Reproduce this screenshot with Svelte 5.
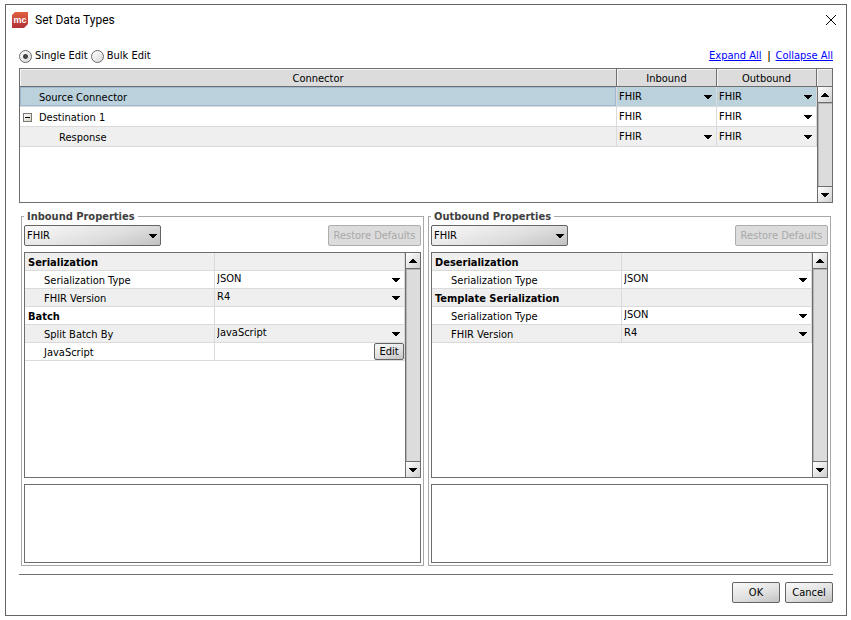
<script>
  let mode = $state("single");

  let connectors = $state([
    { name: "Source Connector", level: 0, inbound: "FHIR", outbound: "FHIR", selected: true },
    { name: "Destination 1", level: 0, inbound: "FHIR", outbound: "FHIR", fixed: true, expandable: true },
    { name: "Response", level: 1, inbound: "FHIR", outbound: "FHIR" },
  ]);

  let panels = $state([
    {
      id: "inbound",
      title: "Inbound Properties",
      type: "FHIR",
      rows: [
        { name: "Serialization", group: true },
        { name: "Serialization Type", value: "JSON" },
        { name: "FHIR Version", value: "R4" },
        { name: "Batch", group: true },
        { name: "Split Batch By", value: "JavaScript" },
        { name: "JavaScript", edit: true },
      ],
    },
    {
      id: "outbound",
      title: "Outbound Properties",
      type: "FHIR",
      rows: [
        { name: "Deserialization", group: true },
        { name: "Serialization Type", value: "JSON" },
        { name: "Template Serialization", group: true },
        { name: "Serialization Type", value: "JSON" },
        { name: "FHIR Version", value: "R4" },
      ],
    },
  ]);
</script>

{#snippet arrow(up)}
  <svg class="arrow" class:up width="8" height="4" viewBox="0 0 8 4" shape-rendering="crispEdges" aria-hidden="true">
    <path d="M0 0h8v1h-1v1h-1v1h-1v1h-2v-1h-1v-1h-1v-1h-1z" />
  </svg>
{/snippet}

{#snippet scrollbar()}
  <div class="scrollbar">
    <button type="button" aria-label="Scroll up">{@render arrow(true)}</button>
    <div class="track"></div>
    <button type="button" aria-label="Scroll down">{@render arrow(false)}</button>
  </div>
{/snippet}

{#snippet cellSelect(value, label)}
  <div class="cell-select">
    <select aria-label={label}>
      <option>{value}</option>
    </select>
    {@render arrow(false)}
  </div>
{/snippet}

<div class="dialog" role="dialog" aria-labelledby="dialog-title">
  <header class="titlebar">
    <svg class="logo" width="16" height="16" viewBox="0 0 16 16" aria-hidden="true">
      <defs>
        <linearGradient id="logo-fill" x1="0" y1="0" x2="0" y2="1">
          <stop offset="0" stop-color="#e2603f" />
          <stop offset="1" stop-color="#b03038" />
        </linearGradient>
      </defs>
      <path d="M3 0H16V12L12 16H0V3Z" fill="url(#logo-fill)" />
      <text x="8" y="11" text-anchor="middle">mc</text>
    </svg>
    <h1 id="dialog-title">Set Data Types</h1>
    <button type="button" class="close" aria-label="Close">
      <svg width="10" height="10" viewBox="0 0 10 10"><path d="M0 0L10 10M10 0L0 10" stroke="#000" /></svg>
    </button>
  </header>

  <main>
    <div class="toolbar">
      <label><input type="radio" name="mode" value="single" bind:group={mode} />Single Edit</label>
      <label><input type="radio" name="mode" value="bulk" bind:group={mode} />Bulk Edit</label>
      <nav>
        <a href="#expand">Expand All</a>
        <span class="divider"></span>
        <a href="#collapse">Collapse All</a>
      </nav>
    </div>

    <div class="pane connectors">
      <div class="view">
        <table>
          <thead>
            <tr>
              <th>Connector</th>
              <th class="type-col">Inbound</th>
              <th class="type-col">Outbound</th>
            </tr>
          </thead>
          <tbody>
            {#each connectors as row (row.name)}
              <tr class:selected={row.selected}>
                <td>
                  <div class="node" class:child={row.level > 0}>
                    <span class="handle">
                      {#if row.expandable}
                        <button type="button" class="toggle" aria-label="Collapse {row.name}"></button>
                      {/if}
                    </span>
                    <span class="name">{row.name}</span>
                  </div>
                </td>
                <td>
                  {#if row.fixed}
                    <span class="fixed">{row.inbound}</span>
                  {:else}
                    {@render cellSelect(row.inbound, row.name + " inbound")}
                  {/if}
                </td>
                <td>{@render cellSelect(row.outbound, row.name + " outbound")}</td>
              </tr>
            {/each}
          </tbody>
        </table>
      </div>
      <div class="side">
        <div class="corner"></div>
        {@render scrollbar()}
      </div>
    </div>

    <div class="panels">
      {#each panels as panel (panel.id)}
        <fieldset>
          <legend>{panel.title}</legend>
          <div class="controls">
            <div class="combo">
              <select aria-label="{panel.title} data type">
                <option>{panel.type}</option>
              </select>
              {@render arrow(false)}
            </div>
            <button type="button" class="btn restore" disabled>Restore Defaults</button>
          </div>

          <div class="pane properties">
            <div class="view">
              <table>
                <tbody>
                  {#each panel.rows as row}
                    <tr>
                      <td class={row.group ? "group" : "property"}>{row.name}</td>
                      <td>
                        {#if row.value}
                          {@render cellSelect(row.value, row.name)}
                        {:else if row.edit}
                          <button type="button" class="btn edit">Edit</button>
                        {/if}
                      </td>
                    </tr>
                  {/each}
                </tbody>
              </table>
            </div>
            <div class="side">{@render scrollbar()}</div>
          </div>

          <div class="pane description"></div>
        </fieldset>
      {/each}
    </div>

    <footer>
      <button type="button" class="btn">OK</button>
      <button type="button" class="btn">Cancel</button>
    </footer>
  </main>
</div>

<style>
  :global(body) {
    background: #fff;
  }

  .dialog,
  .dialog * {
    box-sizing: border-box;
  }

  .dialog {
    display: flex;
    flex-direction: column;
    min-height: calc(100vh - 8px);
    margin: 4px 4px 4px 5px;
    border: 1px solid #646464;
    background: #fff;
    color: #000;
    font-family: "DejaVu Sans Condensed", "DejaVu Sans", sans-serif;
    font-size: 11px;
    line-height: 14px;
  }

  button,
  select {
    font: inherit;
    color: inherit;
    margin: 0;
    padding: 0;
  }

  .titlebar {
    display: flex;
    align-items: center;
    height: 30px;
    padding: 0 10px 0 6px;
  }

  .logo text {
    fill: #fff;
    font: bold 9px "Liberation Sans", sans-serif;
  }

  h1 {
    flex: 1;
    margin: 0 0 0 7px;
    font: 12px Roboto, sans-serif;
  }

  .close {
    display: flex;
    border: none;
    background: none;
  }

  .close svg {
    overflow: visible;
  }

  main {
    flex: 1;
    display: flex;
    flex-direction: column;
    padding: 14px 13px 12px;
  }

  .toolbar {
    display: flex;
    gap: 3px;
    height: 14px;
    margin-bottom: 5px;
  }

  label {
    display: flex;
    align-items: center;
    gap: 3px;
  }

  input[type="radio"] {
    appearance: none;
    width: 13px;
    height: 13px;
    margin: 0;
    border: 1px solid #6a6a6a;
    border-radius: 50%;
    background: linear-gradient(135deg, #fff, #d8d8d8);
  }

  input[type="radio"]:checked {
    background: radial-gradient(circle, #444 0 2px, transparent 3px), linear-gradient(135deg, #fff, #d8d8d8);
  }

  nav {
    display: flex;
    align-items: center;
    margin-left: auto;
  }

  nav a {
    color: #00f;
  }

  .divider {
    height: 11px;
    margin: 0 6px;
    border-left: 1px solid #e8851a;
    border-right: 1px solid #3a8cb8;
  }

  .pane {
    display: flex;
    border: 1px solid #6e6e6e;
    background: #fff;
  }

  .view {
    flex: 1;
    min-width: 0;
  }

  .side {
    display: flex;
    flex-direction: column;
    width: 15px;
  }

  .connectors {
    height: 135px;
    flex: none;
  }

  table {
    width: 100%;
    table-layout: fixed;
    border-collapse: separate;
    border-spacing: 0;
  }

  th,
  .corner {
    height: 18px;
    padding: 2px 0 0;
    border-bottom: 1px solid #6e6e6e;
    background: #dcdcdc;
    box-shadow: inset 1px 1px #f4f4f4;
    font-weight: normal;
  }

  th {
    border-right: 1px solid #6e6e6e;
  }

  .type-col {
    width: 100px;
  }

  td {
    padding: 0;
    border-right: 1px solid #dadada;
    border-bottom: 1px solid #dadada;
    white-space: nowrap;
  }

  .connectors td {
    height: 20px;
  }

  .connectors tbody tr:nth-child(3),
  .properties tr:nth-child(odd) {
    background: #efefef;
  }

  tbody tr.selected {
    background: #bbd1dc;
  }

  .selected td:first-child {
    box-shadow: inset 0 0 0 1px #9fb8d0;
  }

  .node {
    display: flex;
    height: 19px;
  }

  .name {
    padding-top: 4px;
  }

  .handle {
    display: flex;
    width: 19px;
    padding: 6px 0 0 3px;
  }

  .child .handle {
    width: 39px;
  }

  .toggle {
    width: 9px;
    height: 9px;
    border: 1px solid #7a7a72;
    background:
      linear-gradient(#000, #000) center / 5px 1px no-repeat,
      linear-gradient(135deg, #fff, #d6d2c6);
  }

  .fixed {
    display: block;
    height: 18px;
    padding-left: 2px;
    line-height: 18px;
  }

  .cell-select,
  .combo {
    position: relative;
  }

  select {
    display: block;
    width: 100%;
    appearance: none;
    border: none;
    border-radius: 0;
    background: none;
  }

  .cell-select select {
    height: 18px;
    padding-left: 2px;
  }

  .cell-select .arrow,
  .combo .arrow {
    position: absolute;
    top: 7px;
    right: 4px;
    pointer-events: none;
  }

  .arrow.up {
    transform: rotate(180deg);
  }

  .scrollbar {
    flex: 1;
    display: flex;
    flex-direction: column;
    border-left: 1px solid #6e6e6e;
  }

  .scrollbar button {
    display: flex;
    align-items: center;
    justify-content: center;
    height: 15px;
    border: none;
    background: linear-gradient(135deg, #fff, #cfcfcf);
  }

  .track {
    flex: 1;
    border: 1px solid #6e6e6e;
    border-width: 1px 0;
    background: #dcdcdc;
    box-shadow: inset 1px 1px #b4b4b4;
  }

  .panels {
    flex: 1;
    display: flex;
    gap: 4px;
    margin: 6px 2px 8px;
  }

  fieldset {
    flex: 1;
    display: flex;
    flex-direction: column;
    gap: 6px;
    min-width: 0;
    margin: 0;
    padding: 2px;
    border: 1px solid #a8a8a8;
  }

  legend {
    padding: 2px 3px 0;
    color: #404040;
    font-weight: bold;
    line-height: 12px;
  }

  .controls {
    display: flex;
    justify-content: space-between;
  }

  .combo {
    width: 137px;
  }

  .combo select,
  .btn {
    height: 21px;
    border: 1px solid #646464;
    border-radius: 2px;
    background: linear-gradient(165deg, #fafafa, #dedede 60%, #c2c2c2);
  }

  .combo select {
    padding: 1px 0 0 2px;
  }

  .combo .arrow {
    top: 9px;
  }

  .btn.restore {
    width: 93px;
    border-color: #adadad;
    background: #dcdcdc;
    color: #a8a8a8;
  }

  .properties {
    flex: 1;
  }

  .properties td {
    height: 18px;
  }

  .properties .cell-select select {
    height: 17px;
    padding-bottom: 1px;
  }

  .properties .group,
  .properties .property {
    padding-top: 2px;
    line-height: 15px;
  }

  .group {
    padding-left: 3px;
    font-weight: bold;
  }

  .property {
    padding-left: 19px;
  }

  .btn.edit {
    display: block;
    width: 30px;
    height: 17px;
    margin-left: auto;
    line-height: 15px;
  }

  .description {
    height: 79px;
  }

  footer {
    display: flex;
    justify-content: flex-end;
    gap: 5px;
    padding-top: 7px;
    border-top: 1px solid #6e6e6e;
  }

  footer .btn {
    width: 48px;
  }
</style>
